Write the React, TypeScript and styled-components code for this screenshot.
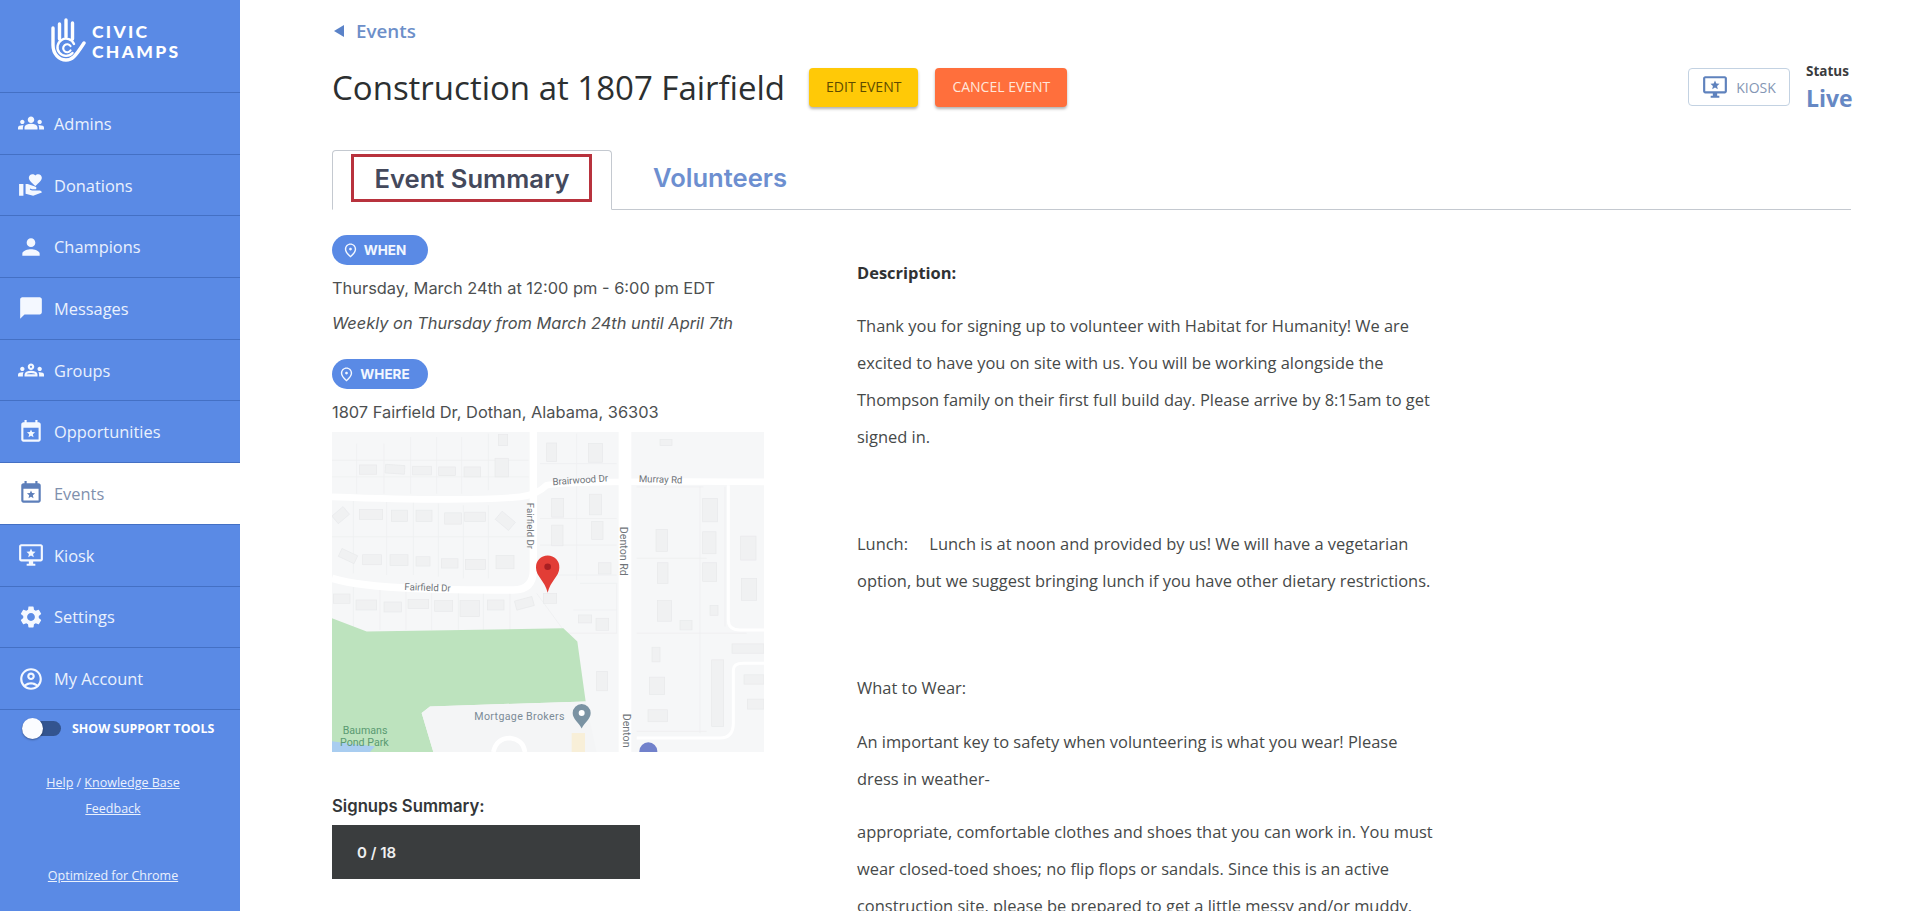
import React from 'react'
import styled, { createGlobalStyle } from 'styled-components'
import {
  MdChatBubble,
  MdGroups,
  MdOutlineAccountCircle,
  MdOutlineGroups,
  MdOutlinePlace,
  MdPerson,
  MdSettings,
  MdVolunteerActivism,
} from 'react-icons/md'

const GlobalStyle = createGlobalStyle`
  html, body {
    margin: 0;
    height: 911px;
    overflow: hidden;
    background: #fff;
    font-family: 'Open Sans', sans-serif;
  }
  * { box-sizing: border-box; }
`

//#region sidebar
const Page = styled.div`
  display: flex;
  height: 911px;
  overflow: hidden;
`
const Sidebar = styled.aside`
  width: 240px;
  flex: none;
  background: #5a8ae5;
  display: flex;
  flex-direction: column;
  color: #eaf1fd;
`
const LogoBar = styled.div`
  height: 93px;
  flex: none;
  border-bottom: 1px solid #4470c4;
  display: flex;
  align-items: flex-start;
  padding: 18px 0 0 50px;
  gap: 6px;
`
const LogoText = styled.div`
  font-family: 'Lato', sans-serif;
  font-weight: 900;
  font-size: 17.5px;
  line-height: 20px;
  letter-spacing: 2.3px;
  color: #fff;
  padding-top: 4px;
`
const NavItem = styled.div<{ $active?: boolean }>`
  height: 61.7px;
  flex: none;
  display: flex;
  align-items: center;
  padding-left: 18px;
  gap: 10px;
  font-size: 16.4px;
  border-bottom: 1px solid #4470c4;
  background: ${(p) => (p.$active ? '#fff' : 'transparent')};
  color: ${(p) => (p.$active ? '#7f90ad' : '#eaf1fd')};
  svg {
    width: 26px;
    height: 26px;
    flex: none;
    color: ${(p) => (p.$active ? '#5d7fba' : '#f4f8ff')};
  }
`
const ToggleRow = styled.div`
  display: flex;
  align-items: center;
  padding: 8px 0 0 22px;
  height: 30px;
  gap: 11px;
  font-size: 12.4px;
  font-weight: 700;
  color: #fff;
`
const ToggleTrack = styled.div`
  position: relative;
  width: 39px;
  height: 15px;
  border-radius: 8px;
  background: #33548f;
`
const ToggleThumb = styled.div`
  position: absolute;
  left: 0;
  top: -3px;
  width: 21px;
  height: 21px;
  border-radius: 50%;
  background: #fbfcff;
  box-shadow: 0 1px 2px rgba(0, 0, 0, 0.35);
`
const SideLinks = styled.div<{ $top: number }>`
  margin-top: ${(p) => p.$top}px;
  width: 226px;
  text-align: center;
  font-size: 12.5px;
  line-height: 26px;
  color: #eaf1fd;
  a {
    color: inherit;
    text-decoration: underline;
  }
`
//#endregion

//#region header
const Main = styled.main`
  flex: 1;
  min-width: 0;
  padding: 0 69px 0 92px;
`
const BackLink = styled.div`
  height: 62px;
  display: flex;
  align-items: center;
  gap: 12px;
  font-size: 18.8px;
  font-weight: 600;
  color: #6d8fc9;
`
const BackArrow = styled.span`
  width: 0;
  height: 0;
  margin-left: 2px;
  border-style: solid;
  border-width: 6px 10px 6px 0;
  border-color: transparent #5a82c8 transparent transparent;
`
const TitleRow = styled.div`
  display: flex;
  align-items: center;
  height: 50px;
`
const Title = styled.h1`
  margin: 0 24px 0 0;
  font-size: 33px;
  font-weight: 400;
  color: #2c2f30;
  white-space: nowrap;
`
const ActionButton = styled.button<{ $bg: string; $fg: string }>`
  height: 39px;
  padding: 0 17px 2px;
  margin-right: 17px;
  border: 0;
  border-radius: 4px;
  background: ${(p) => p.$bg};
  color: ${(p) => p.$fg};
  font-family: 'Open Sans', sans-serif;
  font-size: 14px;
  text-transform: uppercase;
  box-shadow: 0 2px 3px rgba(0, 0, 0, 0.3);
`
const KioskButton = styled.button`
  margin-left: auto;
  width: 102px;
  height: 38px;
  display: flex;
  align-items: center;
  justify-content: center;
  gap: 8px;
  border: 1px solid #c3d2e2;
  border-radius: 4px;
  background: #fff;
  font-family: 'Open Sans', sans-serif;
  font-size: 14px;
  color: #8496b4;
  svg {
    width: 26px;
    height: 26px;
    color: #5f82bd;
  }
`
const StatusBox = styled.div`
  margin-left: 16px;
  width: 45px;
  display: flex;
  flex-direction: column;
`
const StatusLabel = styled.div`
  font-size: 13.5px;
  font-weight: 700;
  line-height: 18px;
  color: #3a3c3e;
`
const StatusValue = styled.div`
  margin-top: 3px;
  font-size: 23px;
  font-weight: 700;
  line-height: 30px;
  color: #6688c4;
`
//#endregion

//#region tabs
const Tabs = styled.div`
  display: flex;
  align-items: flex-end;
  height: 61px;
  margin-top: 37px;
  border-bottom: 1px solid #c4c9d0;
`
const ActiveTab = styled.div`
  position: relative;
  width: 280px;
  height: 60px;
  margin-bottom: -1px;
  padding-bottom: 3px;
  border: 1px solid #c4c9d0;
  border-bottom: 1px solid #fff;
  border-radius: 4px 4px 0 0;
  display: flex;
  align-items: center;
  justify-content: center;
  font-family: 'Inter', sans-serif;
  font-weight: 600;
  font-size: 25.6px;
  color: #44495c;
  background: #fff;
`
const Highlight = styled.div`
  position: absolute;
  left: 18px;
  top: 3px;
  width: 241px;
  height: 48px;
  border: 3px solid #b8323d;
`
const Tab = styled.div`
  margin-left: 41px;
  height: 60px;
  padding-bottom: 3px;
  display: flex;
  align-items: center;
  font-family: 'Inter', sans-serif;
  font-weight: 600;
  font-size: 25.6px;
  color: #6d8fd0;
`
//#endregion

//#region content
const Columns = styled.div`
  display: flex;
`
const LeftColumn = styled.section`
  width: 525px;
  flex: none;
  padding-top: 25px;
  font-family: 'Inter', sans-serif;
  font-size: 16.4px;
  color: #4d5051;
`
const Pill = styled.div`
  width: 96px;
  height: 30px;
  margin-bottom: 5px;
  padding-right: 12px;
  border-radius: 15px;
  background: #5a8ae5;
  color: #f2f7ff;
  display: flex;
  align-items: center;
  justify-content: center;
  gap: 5px;
  font-size: 13.5px;
  font-weight: 700;
  svg {
    width: 17px;
    height: 17px;
  }
`
const InfoLine = styled.div<{ $italic?: boolean }>`
  height: 35px;
  display: flex;
  align-items: center;
  font-style: ${(p) => (p.$italic ? 'italic' : 'normal')};
`
const WhereBlock = styled.div`
  margin-top: 19px;
`
const MapFrame = styled.svg`
  display: block;
  width: 432px;
  height: 320px;
  margin-top: 3px;
`
const SignupsTitle = styled.div`
  margin-top: 44px;
  font-size: 16.7px;
  font-weight: 600;
  color: #333638;
`
const SignupsBar = styled.div`
  margin-top: 9px;
  width: 308px;
  height: 54px;
  padding-left: 25px;
  display: flex;
  align-items: center;
  background: #3a3d3e;
  color: #eff0f0;
  font-size: 15px;
  font-weight: 600;
`
const Description = styled.section`
  width: 600px;
  padding-top: 44px;
  font-size: 16.45px;
  line-height: 37px;
  color: #464949;
`
const DescriptionTitle = styled.div`
  font-weight: 700;
  color: #303233;
  margin-bottom: 16px;
`
const Paragraph = styled.p`
  margin: 0 0 16.5px;
`
//#endregion

const CalendarStar = () => (
  <svg viewBox="0 0 24 24" fill="currentColor">
    <path d="M16 1v2H8V1H6v2H5c-1.11 0-1.99.9-1.99 2L3 19c0 1.1.89 2 2 2h14c1.1 0 2-.9 2-2V5c0-1.1-.9-2-2-2h-1V1h-2zm3 18H5V8h14v11z" />
    <path d="M12 9.6l1.05 2.5 2.7.22-2.05 1.78.62 2.65L12 15.35 9.68 16.75l.62-2.65-2.05-1.78 2.7-.22z" />
  </svg>
)

const DesktopStar = () => (
  <svg viewBox="0 0 24 24" fill="currentColor">
    <path d="M21 2H3c-1.1 0-2 .9-2 2v12c0 1.1.9 2 2 2h7v2H8v2h8v-2h-2v-2h7c1.1 0 2-.9 2-2V4c0-1.1-.9-2-2-2zm0 14H3V4h18v12z" />
    <path d="M12 6l1.2 2.8 3 .25-2.3 2 .7 2.95L12 12.45 9.4 14l.7-2.95-2.3-2 3-.25z" />
  </svg>
)

const HandLogo = () => (
  <svg width="36" height="45" viewBox="0 0 36 45" fill="none" stroke="#fff" strokeLinecap="round">
    <path d="M3 10v17c0 9 6 15 13 15 6 0 9-3 18-17" strokeWidth="3.4" />
    <path d="M9.5 6v15M16 2v17M22.5 5v16" strokeWidth="3.4" />
    <path d="M24 26a8.6 8.6 0 1 0-1.5 9" strokeWidth="2.4" />
    <path d="M20.5 28a4 4 0 1 0 0 4.5" strokeWidth="2.2" />
  </svg>
)

const navItems = [
  { label: 'Admins', icon: <MdGroups /> },
  { label: 'Donations', icon: <MdVolunteerActivism /> },
  { label: 'Champions', icon: <MdPerson /> },
  { label: 'Messages', icon: <MdChatBubble /> },
  { label: 'Groups', icon: <MdOutlineGroups /> },
  { label: 'Opportunities', icon: <CalendarStar /> },
  { label: 'Events', icon: <CalendarStar />, active: true },
  { label: 'Kiosk', icon: <DesktopStar /> },
  { label: 'Settings', icon: <MdSettings /> },
  { label: 'My Account', icon: <MdOutlineAccountCircle /> },
]

// [x, y, w, h, rotation] in map coordinates
const buildings: number[][] = [
  [118, 104, 52, 28, 0], [196, 104, 58, 26, 4], [278, 108, 56, 26, 0], [356, 110, 50, 26, 0], [432, 110, 50, 30, 0],
  [525, 84, 40, 56, 0], [535, 12, 28, 34, 0], [680, 38, 30, 56, 0], [805, 40, 42, 56, 0], [1020, 28, 36, 18, 0],
  [118, 238, 70, 30, 0], [214, 240, 48, 34, 0], [288, 240, 48, 34, 0], [374, 248, 50, 34, 0], [434, 246, 62, 28, 0],
  [530, 256, 52, 32, 40], [40, 240, 44, 30, -40], [695, 205, 36, 56, 0], [808, 192, 36, 62, 0], [695, 285, 34, 62, 0],
  [815, 274, 34, 54, 0], [58, 365, 52, 26, 25], [128, 374, 56, 30, 0], [210, 374, 54, 32, 0], [288, 380, 42, 28, 0],
  [364, 386, 50, 28, 0], [436, 388, 60, 30, 0], [528, 376, 54, 40, 0], [835, 398, 38, 34, 0], [40, 492, 50, 28, 0],
  [108, 510, 62, 30, 0], [192, 516, 52, 30, 0], [264, 508, 62, 28, 0], [344, 512, 54, 32, 0], [420, 512, 58, 48, 0],
  [502, 510, 50, 30, 0], [586, 506, 54, 28, -15], [670, 490, 40, 30, 0], [775, 555, 40, 24, 0], [828, 565, 38, 36, 0],
  [1148, 205, 44, 70, 0], [1008, 298, 34, 66, 0], [1148, 305, 40, 66, 0], [1262, 318, 46, 72, 0], [1012, 398, 32, 62, 0],
  [1148, 398, 42, 56, 0], [1264, 445, 46, 66, 0], [1012, 512, 42, 62, 0], [1080, 572, 36, 28, 0], [1170, 526, 24, 30, 0],
  [996, 652, 24, 44, 0], [988, 742, 46, 52, 0], [984, 840, 58, 36, 0], [830, 725, 32, 58, 0], [1236, 642, 96, 28, 0],
  [1175, 690, 36, 200, 0], [1272, 735, 60, 28, 0], [1282, 808, 50, 30, 0], [340, 865, 60, 40, 30], [420, 850, 50, 30, 30],
]

const MapDrawing = () => (
  <MapFrame viewBox="36 5 1296 962" preserveAspectRatio="none">
    <rect x="36" y="5" width="1296" height="962" fill="#f6f7f8" />
    <g stroke="#eeeff1" strokeWidth="2.5" fill="none">
      <path d="M110 40v150M192 40v150M272 20v170M350 20v170M425 20v170M505 10v170M100 210v220M200 215v220M280 215v220M355 220v220M430 225v220M505 225v220" />
      <path d="M36 90h590M36 140h590M36 320h590M660 100h230M770 10v440M660 265h230M660 345h230M660 435h230M780 460h110v150H730M890 540H760" />
      <path d="M950 170h200M950 385h210M950 610h330M1140 170v740M1215 170v420M950 905h210" />
      <path d="M100 470v130M180 470v130M258 475v125M335 475v125M415 480v120M490 480v120M570 480v120M650 490l80 110" />
    </g>
    {buildings.map(([x, y, w, h, r], i) => (
      <rect
        key={i}
        x={x}
        y={y}
        width={w}
        height={h}
        fill="#f0f1f2"
        stroke="#e8e9eb"
        strokeWidth="2"
        transform={`rotate(${r} ${x + w / 2} ${y + h / 2})`}
      />
    ))}
    <g stroke="#fff" fill="none">
      <path d="M915 5v962" strokeWidth="38" />
      <path d="M36 200C300 210 500 210 600 200Q650 195 680 165Q760 150 1332 155" strokeWidth="20" />
      <path d="M640 5V420Q640 480 580 480C400 480 150 480 36 445" strokeWidth="22" />
      <path d="M1225 165V570Q1225 600 1260 600H1332" strokeWidth="9" />
      <path d="M950 925H1200Q1240 925 1240 880V720Q1240 700 1270 700H1332" strokeWidth="9" />
    </g>
    <path d="M36 565L140 605L730 595L772 635L797 815L330 830L305 850L340 967H36Z" fill="#bde3be" />
    <path d="M36 935Q100 945 165 950L150 967H36Z" fill="#a9cdf0" />
    <path d="M340 967L305 850L330 830L797 815L830 967Z" fill="#f4f5f6" />
    <path d="M520 967Q530 925 570 925Q610 930 615 967" fill="none" stroke="#fff" strokeWidth="14" />
    <rect x="755" y="910" width="40" height="57" fill="#f8efd8" />
    <g fontFamily="Roboto, sans-serif" fontSize="32" fill="#6e7378">
      <text x="698" y="165" transform="rotate(-4 698 165)" fontSize="29">Brairwood Dr</text>
      <text x="956" y="155" transform="rotate(2 956 155)" fontSize="29">Murray Rd</text>
      <text x="253" y="480" transform="rotate(2 253 480)" fontSize="29">Fairfield Dr</text>
      <text x="622" y="218" transform="rotate(90 622 218)" fontSize="29">Fairfield Dr</text>
      <text x="901" y="290" transform="rotate(90 901 290)">Denton Rd</text>
      <text x="908" y="852" transform="rotate(90 908 852)">Denton</text>
      <text x="463" y="872" fill="#7b8b96" letterSpacing="1">Mortgage Brokers</text>
      <text x="68" y="914" fill="#5a9a72">Baumans</text>
      <text x="60" y="949" fill="#5a9a72">Pond Park</text>
    </g>
    <path d="M785 823a27 27 0 0 1 27 27c0 18-18 28-27 46-9-18-27-28-27-46a27 27 0 0 1 27-27z" fill="#7b93a3" />
    <circle cx="785" cy="850" r="9" fill="#fff" />
    <circle cx="985" cy="965" r="27" fill="#7181cb" />
    <path d="M683 376a35 35 0 0 1 35 37c0 26-27 40-35 75-8-35-35-49-35-75a35 35 0 0 1 35-37z" fill="#e23d36" />
    <circle cx="683" cy="410" r="10" fill="#a81f22" />
  </MapFrame>
)

const App = () => {
  return (
    <Page>
      <GlobalStyle />
      <Sidebar>
        <LogoBar>
          <HandLogo />
          <LogoText>
            CIVIC
            <br />
            CHAMPS
          </LogoText>
        </LogoBar>
        {navItems.map((item) => (
          <NavItem key={item.label} $active={item.active}>
            {item.icon}
            {item.label}
          </NavItem>
        ))}
        <ToggleRow>
          <ToggleTrack>
            <ToggleThumb />
          </ToggleTrack>
          SHOW SUPPORT TOOLS
        </ToggleRow>
        <SideLinks $top={30}>
          <a>Help</a> / <a>Knowledge Base</a>
          <br />
          <a>Feedback</a>
        </SideLinks>
        <SideLinks $top={41}>
          <a>Optimized for Chrome</a>
        </SideLinks>
      </Sidebar>
      <Main>
        <BackLink>
          <BackArrow />
          Events
        </BackLink>
        <TitleRow>
          <Title>Construction at 1807 Fairfield</Title>
          <ActionButton $bg="#ffc907" $fg="#5e4b00">
            Edit Event
          </ActionButton>
          <ActionButton $bg="#ff6f3c" $fg="#ffe6da">
            Cancel Event
          </ActionButton>
          <KioskButton>
            <DesktopStar />
            KIOSK
          </KioskButton>
          <StatusBox>
            <StatusLabel>Status</StatusLabel>
            <StatusValue>Live</StatusValue>
          </StatusBox>
        </TitleRow>
        <Tabs>
          <ActiveTab>
            <Highlight />
            Event Summary
          </ActiveTab>
          <Tab>Volunteers</Tab>
        </Tabs>
        <Columns>
          <LeftColumn>
            <Pill>
              <MdOutlinePlace />
              WHEN
            </Pill>
            <InfoLine>Thursday, March 24th at 12:00 pm - 6:00 pm EDT</InfoLine>
            <InfoLine $italic>Weekly on Thursday from March 24th until April 7th</InfoLine>
            <WhereBlock>
              <Pill>
                <MdOutlinePlace />
                WHERE
              </Pill>
              <InfoLine>1807 Fairfield Dr, Dothan, Alabama, 36303</InfoLine>
              <MapDrawing />
            </WhereBlock>
            <SignupsTitle>Signups Summary:</SignupsTitle>
            <SignupsBar>0 / 18</SignupsBar>
          </LeftColumn>
          <Description>
            <DescriptionTitle>Description:</DescriptionTitle>
            <Paragraph>
              Thank you for signing up to volunteer with Habitat for Humanity! We are
              <br />
              excited to have you on site with us. You will be working alongside the
              <br />
              Thompson family on their first full build day. Please arrive by 8:15am to get
              <br />
              signed in.
            </Paragraph>
            <Paragraph>&nbsp;</Paragraph>
            <Paragraph>
              Lunch:&nbsp;&nbsp;&nbsp;&nbsp; Lunch is at noon and provided by us! We will have a vegetarian
              <br />
              option, but we suggest bringing lunch if you have other dietary restrictions.
            </Paragraph>
            <Paragraph>&nbsp;</Paragraph>
            <Paragraph>What to Wear:</Paragraph>
            <Paragraph>
              An important key to safety when volunteering is what you wear! Please
              <br />
              dress in weather-
            </Paragraph>
            <Paragraph>
              appropriate, comfortable clothes and shoes that you can work in. You must
              <br />
              wear closed-toed shoes; no flip flops or sandals. Since this is an active
              <br />
              construction site, please be prepared to get a little messy and/or muddy.
            </Paragraph>
          </Description>
        </Columns>
      </Main>
    </Page>
  )
}

export default App
